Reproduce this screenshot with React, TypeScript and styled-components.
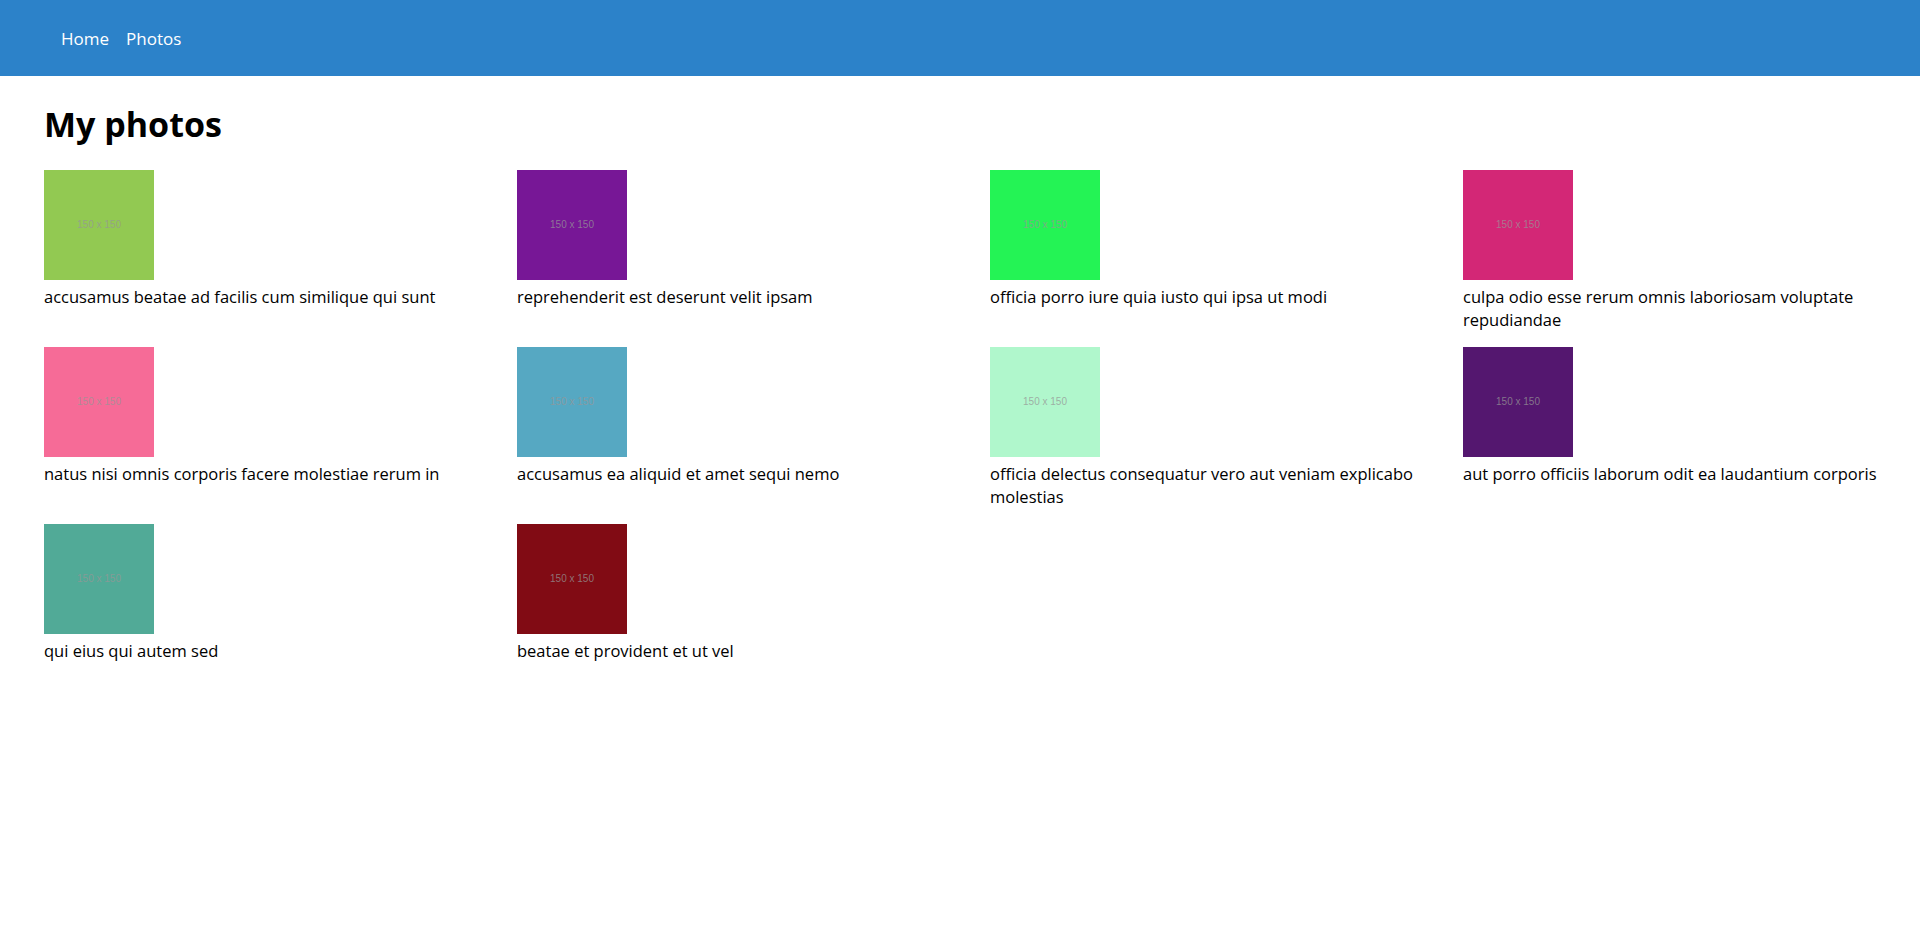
import React from "react";
import styled, { createGlobalStyle } from "styled-components";

const GlobalStyle = createGlobalStyle`
  html, body { margin: 0; padding: 0; background: #ffffff; }
  body { font-family: "Open Sans", "Noto Sans", sans-serif; color: #000; }
`;

const Header = styled.header`
  height: 76px;
  background: #2c82c9;
  display: flex;
  align-items: center;
  padding-left: 61px;
  gap: 17px;
`;

const NavLink = styled.a`
  color: #ffffff;
  font-size: 17px;
  text-decoration: none;
  cursor: pointer;
`;

const Main = styled.main`
  padding: 0 0 0 44px;
`;

const Title = styled.h1`
  font-size: 34px;
  font-weight: 700;
  margin: 28px 0 25px;
  line-height: 1.2;
`;

const Grid = styled.div`
  display: grid;
  grid-template-columns: repeat(4, 1fr);
  column-gap: 16px;
  row-gap: 15px;
`;

const Card = styled.div`
  display: flex;
  flex-direction: column;
`;

const Thumb = styled.div<{ $bg: string }>`
  width: 110px;
  height: 110px;
  background: ${(p) => p.$bg};
  display: flex;
  align-items: center;
  justify-content: center;
  margin-bottom: 5px;
`;

const ThumbLabel = styled.span`
  font-family: "Liberation Sans", Arial, sans-serif;
  font-size: 10px;
  color: rgba(150, 150, 150, 0.75);
`;

const Caption = styled.div`
  font-size: 16.5px;
  line-height: 23.5px;
`;

const photos = [
  { c: "#92c952", t: "accusamus beatae ad facilis cum similique qui sunt" },
  { c: "#771796", t: "reprehenderit est deserunt velit ipsam" },
  { c: "#24f355", t: "officia porro iure quia iusto qui ipsa ut modi" },
  { c: "#d32776", t: "culpa odio esse rerum omnis laboriosam voluptate repudiandae" },
  { c: "#f66b97", t: "natus nisi omnis corporis facere molestiae rerum in" },
  { c: "#56a8c2", t: "accusamus ea aliquid et amet sequi nemo" },
  { c: "#b0f7cc", t: "officia delectus consequatur vero aut veniam explicabo molestias" },
  { c: "#54176f", t: "aut porro officiis laborum odit ea laudantium corporis" },
  { c: "#51aa97", t: "qui eius qui autem sed" },
  { c: "#810b14", t: "beatae et provident et ut vel" },
];

export default function App() {
  return (
    <>
      <GlobalStyle />
      <Header>
        <NavLink>Home</NavLink>
        <NavLink>Photos</NavLink>
      </Header>
      <Main>
        <Title>My photos</Title>
        <Grid>
          {photos.map((p) => (
            <Card key={p.t}>
              <Thumb $bg={p.c}>
                <ThumbLabel>150 x 150</ThumbLabel>
              </Thumb>
              <Caption>{p.t}</Caption>
            </Card>
          ))}
        </Grid>
      </Main>
    </>
  );
}
